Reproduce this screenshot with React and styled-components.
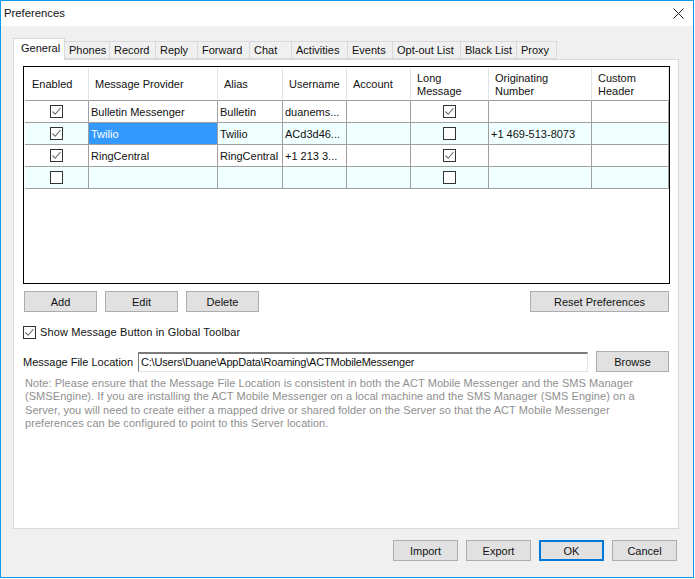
import React from "react";
import styled, { createGlobalStyle } from "styled-components";

const Global = createGlobalStyle`
  html, body { margin: 0; padding: 0; background: #fff; }
  body { font-family: "Liberation Sans", Arial, sans-serif; font-size: 11px; color: #111; }
  * { box-sizing: border-box; }
`;

const Window = styled.div`
  width: 694px;
  height: 578px;
  border: 1px solid #0e9bea;
  background: #f0f0f0;
  display: flex;
  flex-direction: column;
`;
const TitleBar = styled.div`
  height: 25px;
  background: #fff;
  display: flex;
  align-items: center;
  justify-content: space-between;
  padding: 0 9px 1px 3px;
  font-size: 11.3px;
  flex: none;
`;
const Body = styled.div`
  flex: 1;
  padding: 12px 14px 0 12px;
  display: flex;
  flex-direction: column;
`;
const TabStrip = styled.div`
  display: flex;
  align-items: flex-end;
  height: 21px;
  position: relative;
  z-index: 1;
`;
const Tab = styled.div`
  height: ${(p) => (p.$active ? "22px" : "18px")};
  margin-bottom: ${(p) => (p.$active ? "-1px" : "0")};
  width: ${(p) => p.$w}px;
  flex: none;
  background: ${(p) => (p.$active ? "#fff" : "#f0f0f0")};
  border: 1px solid #d9d9d9;
  border-left-width: ${(p) => (p.$active ? "1px" : "0")};
  border-bottom-width: ${(p) => (p.$active ? "0" : "1px")};
  display: flex;
  align-items: center;
  padding-left: ${(p) => (p.$active ? "7px" : "4px")};
  padding-bottom: ${(p) => (p.$active ? "3px" : "1px")};
  white-space: nowrap;
`;
const Page = styled.div`
  width: 666px;
  height: 470px;
  background: #fff;
  border: 1px solid #d9d9d9;
  padding: 6px 8px 0 9px;
  display: flex;
  flex-direction: column;
`;
const GridBox = styled.div`
  width: 647px;
  height: 218px;
  border: 1px solid #000;
  padding: 1px;
  flex: none;
`;
const Table = styled.div`
  display: grid;
  grid-template-columns: 64px 129px 65px 64px 64px 78px 103px 77px;
  grid-template-rows: 33px repeat(4, 22px);
  width: 644px;
`;
const Head = styled.div`
  border-right: 1px solid #e4e4e4;
  border-bottom: 1px solid #a0a0a0;
  display: flex;
  align-items: center;
  padding: 1px 12px 0 ${(p) => p.$pad}px;
  line-height: 13px;
`;
const Cell = styled.div`
  border-right: 1px solid #a0a0a0;
  border-bottom: 1px solid #a0a0a0;
  display: flex;
  align-items: center;
  justify-content: ${(p) => (p.$center ? "center" : "flex-start")};
  padding-left: ${(p) => (p.$center ? 0 : 2)}px;
  background: ${(p) => (p.$selected ? "#3399ff" : p.$alt ? "#f0ffff" : "#fff")};
  color: ${(p) => (p.$selected ? "#fff" : "#111")};
  white-space: nowrap;
  overflow: hidden;
`;
const Box = styled.span`
  width: 13px;
  height: 13px;
  flex: none;
  border: 1px solid #333;
  background: #fff;
  display: inline-flex;
  align-items: center;
  justify-content: center;
`;
const ButtonRow = styled.div`
  display: flex;
  justify-content: space-between;
  margin: 7px 0 0 1px;
  padding-right: 1px;
`;
const ButtonGroup = styled.div`
  display: flex;
  gap: 8px;
`;
const Button = styled.div`
  width: ${(p) => p.$w}px;
  height: 21px;
  flex: none;
  background: #e1e1e1;
  border: ${(p) => (p.$primary ? "2px solid #0078d7" : "1px solid #adadad")};
  display: flex;
  align-items: center;
  justify-content: center;
  color: #111;
`;
const CheckRow = styled.div`
  display: flex;
  align-items: center;
  gap: 4px;
  margin-top: 14px;
  height: 13px;
`;
const CheckLabel = styled.span`
  padding-bottom: 2px;
  letter-spacing: 0.13px;
`;
const FileRow = styled.div`
  display: flex;
  align-items: center;
  margin-top: 12px;
  height: 21px;
`;
const FileLabel = styled.div`
  width: 115px;
  flex: none;
  white-space: nowrap;
`;
const FileInput = styled.div`
  width: 450px;
  height: 20px;
  flex: none;
  background: #fff;
  border: 1px solid #e3e3e3;
  border-top: 2px solid #7a7a7a;
  border-left: 1px solid #7a7a7a;
  display: flex;
  align-items: center;
  padding-left: 2px;
  white-space: nowrap;
  letter-spacing: -0.2px;
  margin-right: 8px;
`;
const Note = styled.div`
  margin: 5px 0 0 2px;
  width: 625px;
  color: #8f8f8f;
  line-height: 13.4px;
  letter-spacing: 0.06px;
  white-space: nowrap;
`;
const Footer = styled.div`
  display: flex;
  justify-content: flex-end;
  gap: 8px;
  margin-top: 11px;
  padding-right: 2px;
`;

const Check = () => (
  <svg width="11" height="11" viewBox="0 0 11 11" fill="none">
    <path d="M1.5 5.5 L4.2 8.3 L9.5 2" stroke="#666" strokeWidth="1.1" />
  </svg>
);
const CheckBox = ({ on }) => <Box>{on && <Check />}</Box>;
const CloseIcon = () => (
  <svg width="11" height="11" viewBox="0 0 11 11" fill="none">
    <path d="M0.5 0.5 L10.5 10.5 M10.5 0.5 L0.5 10.5" stroke="#222" strokeWidth="1" />
  </svg>
);

const tabs = [
  ["General", 52], ["Phones", 45], ["Record", 46], ["Reply", 42], ["Forward", 52],
  ["Chat", 42], ["Activities", 56], ["Events", 45], ["Opt-out List", 68],
  ["Black List", 56], ["Proxy", 40],
];
const heads = [
  ["Enabled", 7], ["Message Provider", 6], ["Alias", 6], ["Username", 6], ["Account", 6],
  ["Long Message", 6], ["Originating Number", 6], ["Custom Header", 6],
];
const rows = [
  [true, "Bulletin Messenger", "Bulletin", "duanems...", "", true, "", ""],
  [true, "Twilio", "Twilio", "ACd3d46...", "", false, "+1 469-513-8073", ""],
  [true, "RingCentral", "RingCentral", "+1 213 3...", "", true, "", ""],
  [false, "", "", "", "", false, "", ""],
];

export default function App() {
  return (
    <>
      <Global />
      <Window>
        <TitleBar>
          <span>Preferences</span>
          <CloseIcon />
        </TitleBar>
        <Body>
          <TabStrip>
            {tabs.map(([t, w], i) => (
              <Tab key={t} $w={w} $active={i === 0}>{t}</Tab>
            ))}
          </TabStrip>
          <Page>
            <GridBox>
              <Table>
                {heads.map(([h, p]) => <Head key={h} $pad={p}>{h}</Head>)}
                {rows.map((r, ri) =>
                  r.map((c, ci) => {
                    const isBox = typeof c === "boolean";
                    return (
                      <Cell key={ri + "-" + ci} $alt={ri % 2 === 1} $center={isBox} $selected={ri === 1 && ci === 1}>
                        {isBox ? <CheckBox on={c} /> : c}
                      </Cell>
                    );
                  })
                )}
              </Table>
            </GridBox>
            <ButtonRow>
              <ButtonGroup>
                <Button $w={73}>Add</Button>
                <Button $w={73}>Edit</Button>
                <Button $w={73}>Delete</Button>
              </ButtonGroup>
              <Button $w={139}>Reset Preferences</Button>
            </ButtonRow>
            <CheckRow>
              <CheckBox on />
              <CheckLabel>Show Message Button in Global Toolbar</CheckLabel>
            </CheckRow>
            <FileRow>
              <FileLabel>Message File Location</FileLabel>
              <FileInput>C:\Users\Duane\AppData\Roaming\ACTMobileMessenger</FileInput>
              <Button $w={73}>Browse</Button>
            </FileRow>
            <Note>
              Note: Please ensure that the Message File Location is consistent in both the ACT Mobile Messenger and the SMS Manager<br />
              (SMSEngine). If you are installing the ACT Mobile Messenger on a local machine and the SMS Manager (SMS Engine) on a<br />
              Server, you will need to create either a mapped drive or shared folder on the Server so that the ACT Mobile Messenger<br />
              preferences can be configured to point to this Server location.
            </Note>
          </Page>
          <Footer>
            <Button $w={65}>Import</Button>
            <Button $w={65}>Export</Button>
            <Button $w={65} $primary>OK</Button>
            <Button $w={65}>Cancel</Button>
          </Footer>
        </Body>
      </Window>
    </>
  );
}
